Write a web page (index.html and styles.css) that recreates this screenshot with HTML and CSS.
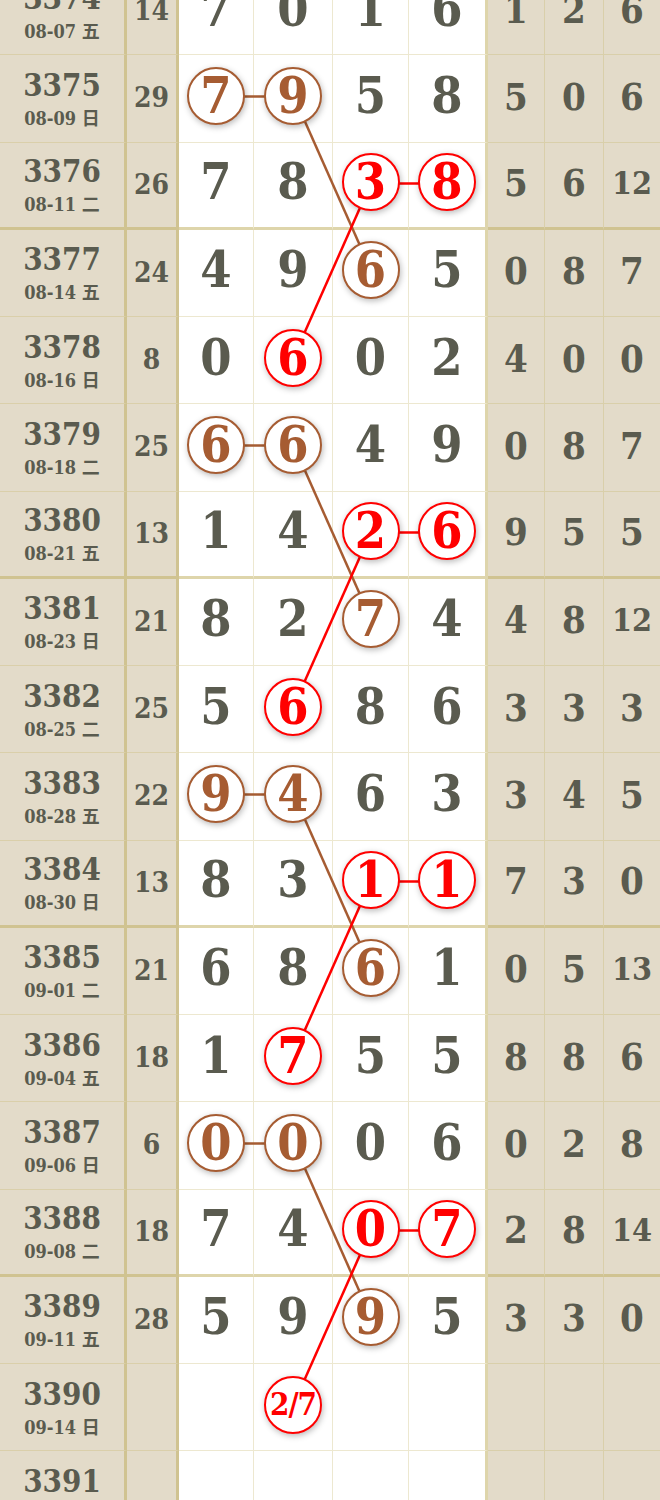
FILE: index.html
```html
<!DOCTYPE html>
<html lang="zh">
<head>
    <meta charset="UTF-8">
    <meta name="viewport" content="width=device-width, initial-scale=1.0">
    <title>走势图</title>
    <link rel="stylesheet" href="styles.css">
</head>
<body>
    <div class="chart">
        <div class="row">
            <div class="cell issue"><span class="no">3374</span><span class="date">08-07 五</span></div>
            <div class="cell sum">14</div>
            <div class="cell num">7</div><div class="cell num">0</div><div class="cell num">1</div><div class="cell num last">6</div>
            <div class="cell stat">1</div><div class="cell stat">2</div><div class="cell stat">6</div>
        </div>
        <div class="row">
            <div class="cell issue"><span class="no">3375</span><span class="date">08-09 日</span></div>
            <div class="cell sum">29</div>
            <div class="cell num"><span class="ball brown">7</span></div><div class="cell num"><span class="ball brown">9</span></div><div class="cell num">5</div><div class="cell num last">8</div>
            <div class="cell stat">5</div><div class="cell stat">0</div><div class="cell stat">6</div>
        </div>
        <div class="row end">
            <div class="cell issue"><span class="no">3376</span><span class="date">08-11 二</span></div>
            <div class="cell sum">26</div>
            <div class="cell num">7</div><div class="cell num">8</div><div class="cell num"><span class="ball red">3</span></div><div class="cell num last"><span class="ball red">8</span></div>
            <div class="cell stat">5</div><div class="cell stat">6</div><div class="cell stat two">12</div>
        </div>
        <div class="row">
            <div class="cell issue"><span class="no">3377</span><span class="date">08-14 五</span></div>
            <div class="cell sum">24</div>
            <div class="cell num">4</div><div class="cell num">9</div><div class="cell num"><span class="ball brown">6</span></div><div class="cell num last">5</div>
            <div class="cell stat">0</div><div class="cell stat">8</div><div class="cell stat">7</div>
        </div>
        <div class="row">
            <div class="cell issue"><span class="no">3378</span><span class="date">08-16 日</span></div>
            <div class="cell sum">8</div>
            <div class="cell num">0</div><div class="cell num"><span class="ball red">6</span></div><div class="cell num">0</div><div class="cell num last">2</div>
            <div class="cell stat">4</div><div class="cell stat">0</div><div class="cell stat">0</div>
        </div>
        <div class="row">
            <div class="cell issue"><span class="no">3379</span><span class="date">08-18 二</span></div>
            <div class="cell sum">25</div>
            <div class="cell num"><span class="ball brown">6</span></div><div class="cell num"><span class="ball brown">6</span></div><div class="cell num">4</div><div class="cell num last">9</div>
            <div class="cell stat">0</div><div class="cell stat">8</div><div class="cell stat">7</div>
        </div>
        <div class="row end">
            <div class="cell issue"><span class="no">3380</span><span class="date">08-21 五</span></div>
            <div class="cell sum">13</div>
            <div class="cell num">1</div><div class="cell num">4</div><div class="cell num"><span class="ball red">2</span></div><div class="cell num last"><span class="ball red">6</span></div>
            <div class="cell stat">9</div><div class="cell stat">5</div><div class="cell stat">5</div>
        </div>
        <div class="row">
            <div class="cell issue"><span class="no">3381</span><span class="date">08-23 日</span></div>
            <div class="cell sum">21</div>
            <div class="cell num">8</div><div class="cell num">2</div><div class="cell num"><span class="ball brown">7</span></div><div class="cell num last">4</div>
            <div class="cell stat">4</div><div class="cell stat">8</div><div class="cell stat two">12</div>
        </div>
        <div class="row">
            <div class="cell issue"><span class="no">3382</span><span class="date">08-25 二</span></div>
            <div class="cell sum">25</div>
            <div class="cell num">5</div><div class="cell num"><span class="ball red">6</span></div><div class="cell num">8</div><div class="cell num last">6</div>
            <div class="cell stat">3</div><div class="cell stat">3</div><div class="cell stat">3</div>
        </div>
        <div class="row">
            <div class="cell issue"><span class="no">3383</span><span class="date">08-28 五</span></div>
            <div class="cell sum">22</div>
            <div class="cell num"><span class="ball brown">9</span></div><div class="cell num"><span class="ball brown">4</span></div><div class="cell num">6</div><div class="cell num last">3</div>
            <div class="cell stat">3</div><div class="cell stat">4</div><div class="cell stat">5</div>
        </div>
        <div class="row end">
            <div class="cell issue"><span class="no">3384</span><span class="date">08-30 日</span></div>
            <div class="cell sum">13</div>
            <div class="cell num">8</div><div class="cell num">3</div><div class="cell num"><span class="ball red">1</span></div><div class="cell num last"><span class="ball red">1</span></div>
            <div class="cell stat">7</div><div class="cell stat">3</div><div class="cell stat">0</div>
        </div>
        <div class="row">
            <div class="cell issue"><span class="no">3385</span><span class="date">09-01 二</span></div>
            <div class="cell sum">21</div>
            <div class="cell num">6</div><div class="cell num">8</div><div class="cell num"><span class="ball brown">6</span></div><div class="cell num last">1</div>
            <div class="cell stat">0</div><div class="cell stat">5</div><div class="cell stat two">13</div>
        </div>
        <div class="row">
            <div class="cell issue"><span class="no">3386</span><span class="date">09-04 五</span></div>
            <div class="cell sum">18</div>
            <div class="cell num">1</div><div class="cell num"><span class="ball red">7</span></div><div class="cell num">5</div><div class="cell num last">5</div>
            <div class="cell stat">8</div><div class="cell stat">8</div><div class="cell stat">6</div>
        </div>
        <div class="row">
            <div class="cell issue"><span class="no">3387</span><span class="date">09-06 日</span></div>
            <div class="cell sum">6</div>
            <div class="cell num"><span class="ball brown">0</span></div><div class="cell num"><span class="ball brown">0</span></div><div class="cell num">0</div><div class="cell num last">6</div>
            <div class="cell stat">0</div><div class="cell stat">2</div><div class="cell stat">8</div>
        </div>
        <div class="row end">
            <div class="cell issue"><span class="no">3388</span><span class="date">09-08 二</span></div>
            <div class="cell sum">18</div>
            <div class="cell num">7</div><div class="cell num">4</div><div class="cell num"><span class="ball red">0</span></div><div class="cell num last"><span class="ball red">7</span></div>
            <div class="cell stat">2</div><div class="cell stat">8</div><div class="cell stat two">14</div>
        </div>
        <div class="row">
            <div class="cell issue"><span class="no">3389</span><span class="date">09-11 五</span></div>
            <div class="cell sum">28</div>
            <div class="cell num">5</div><div class="cell num">9</div><div class="cell num"><span class="ball brown">9</span></div><div class="cell num last">5</div>
            <div class="cell stat">3</div><div class="cell stat">3</div><div class="cell stat">0</div>
        </div>
        <div class="row">
            <div class="cell issue"><span class="no">3390</span><span class="date">09-14 日</span></div>
            <div class="cell sum"></div>
            <div class="cell num"></div><div class="cell num"><span class="ball red guess">2/7</span></div><div class="cell num"></div><div class="cell num last"></div>
            <div class="cell stat"></div><div class="cell stat"></div><div class="cell stat"></div>
        </div>
        <div class="row">
            <div class="cell issue"><span class="no">3391</span><span class="date">09-16 二</span></div>
            <div class="cell sum"></div>
            <div class="cell num"></div><div class="cell num"></div><div class="cell num"></div><div class="cell num last"></div>
            <div class="cell stat"></div><div class="cell stat"></div><div class="cell stat"></div>
        </div>

        <!-- connecting lines, drawn in page coordinates -->
        <svg class="links" width="660" height="1570.5" viewBox="0 -32 660 1570.5">
            <g class="brown-line">
                <line x1="216.5" y1="96.5" x2="293.5" y2="96.5"/>
                <line x1="293.5" y1="95.85" x2="371" y2="270.35"/>
                <line x1="216.5" y1="445.5" x2="293.5" y2="445.5"/>
                <line x1="293.5" y1="444.85" x2="371" y2="619.35"/>
                <line x1="216.5" y1="794.5" x2="293.5" y2="794.5"/>
                <line x1="293.5" y1="793.85" x2="371" y2="968.35"/>
                <line x1="216.5" y1="1143.5" x2="293.5" y2="1143.5"/>
                <line x1="293.5" y1="1142.85" x2="371" y2="1317.35"/>
            </g>
            <g class="red-line">
                <line x1="371" y1="183.5" x2="447" y2="183.5"/>
                <line x1="371" y1="183.1" x2="293.5" y2="357.6"/>
                <line x1="371" y1="532.5" x2="447" y2="532.5"/>
                <line x1="371" y1="532.1" x2="293.5" y2="706.6"/>
                <line x1="371" y1="881.5" x2="447" y2="881.5"/>
                <line x1="371" y1="881.1" x2="293.5" y2="1055.6"/>
                <line x1="371" y1="1230.5" x2="447" y2="1230.5"/>
                <line x1="371" y1="1230.1" x2="293.5" y2="1404.6"/>
            </g>
        </svg>
    </div>
</body>
</html>
```

FILE: styles.css
```css
body {
    margin: 0;
    background: #fff;
    overflow: hidden;
}
.chart {
    position: relative;
    margin-top: -32px;
    font-family: "DejaVu Serif Condensed", "DejaVu Serif", "Noto Sans CJK SC", serif;
    font-stretch: condensed;
    font-weight: bold;
    color: #5a5b4f;
}
.row {
    display: grid;
    grid-template-columns: 127px 52px 75px 79px 76px 79px 57px 59px 56px;
    height: 87.25px;
}
.cell {
    box-sizing: border-box;
    display: flex;
    align-items: center;
    justify-content: center;
    padding-bottom: 5px;
    background: #fff;
    border-right: 1px solid rgba(196, 180, 100, 0.3);
    border-bottom: 1px solid rgba(196, 180, 100, 0.3);
    line-height: 1;
}
.row.end .cell {
    border-bottom: 3px solid rgba(190, 172, 90, 0.5);
}
.issue, .sum, .stat {
    background: #e3dbc9;
}
.issue, .sum, .num.last {
    border-right: 3px solid rgba(190, 172, 90, 0.5);
}
.stat:last-child {
    border-right: none;
}
.issue {
    flex-direction: column;
    padding-bottom: 0;
    padding-top: 1px;
}
.issue .no {
    font-size: 31px;
    line-height: 34px;
}
.issue .date {
    font-size: 18px;
    line-height: 22px;
    margin-top: 6px;
}
.sum {
    font-size: 28px;
    padding-bottom: 0;
}
.num {
    font-size: 50px;
}
.stat {
    font-size: 38px;
    padding-bottom: 3px;
}
.stat.two {
    font-size: 32px;
}
.ball {
    position: relative;
    z-index: 2;
    box-sizing: border-box;
    width: 58px;
    height: 58px;
    border-radius: 50%;
    border: 2.5px solid;
    background: #fff;
    display: flex;
    align-items: center;
    justify-content: center;
    box-shadow: 1px 2px 6px rgba(0, 0, 0, 0.28);
}
.ball.brown {
    color: #a65c32;
}
.ball.red {
    color: #f00;
}
.ball.guess {
    font-size: 31px;
    letter-spacing: -1px;
}
.links {
    position: absolute;
    left: 0;
    top: 0;
    z-index: 1;
}
.links line {
    stroke-width: 2.5;
}
.brown-line {
    stroke: #a65c32;
}
.red-line {
    stroke: #f00;
}
```
